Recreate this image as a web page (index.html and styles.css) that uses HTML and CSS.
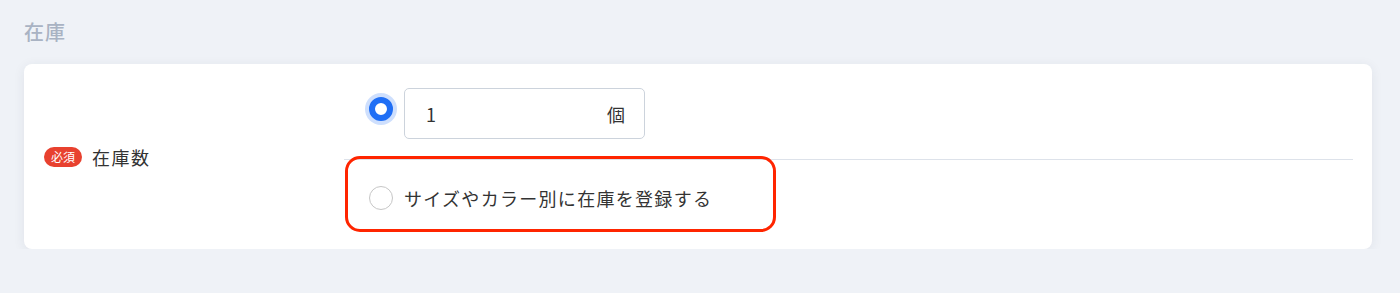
FILE: index.html
```html
<!DOCTYPE html>
<html lang="ja">

<head>
  <meta charset="UTF-8" />
  <meta name="viewport" content="width=device-width, initial-scale=1.0" />
  <title>在庫</title>
  <link rel="stylesheet" href="styles.css">
</head>

<body>
  <div class="section">
    <h2 class="section-title">在庫</h2>

    <div class="card">
      <div class="field-label">
        <span class="required">必須</span>
        <span class="label-text">在庫数</span>
      </div>

      <div class="field-body">
        <div class="option option-stock">
          <span class="radio checked"></span>
          <div class="stock-input">
            <span class="stock-value">1</span>
            <span class="stock-unit">個</span>
          </div>
        </div>

        <div class="option option-variant">
          <span class="radio"></span>
          <span class="option-text">サイズやカラー別に在庫を登録する</span>
          <div class="highlight"></div>
        </div>
      </div>
    </div>
  </div>
</body>

</html>
```

FILE: styles.css
```css
body {
  margin: 0;
  font-family: "Noto Sans CJK JP", "Noto Sans", sans-serif;
  background-color: #eff2f7;
  color: #333;
}

.section {
  padding: 18px 28px 0 24px;
}

.section-title {
  margin: 0 0 18px 0;
  font-size: 20px;
  font-weight: 500;
  line-height: 28px;
  letter-spacing: 1px;
  color: #a9b3c3;
}

.card {
  display: flex;
  align-items: stretch;
  background-color: #fff;
  border-radius: 8px;
  box-shadow: 0 2px 12px rgba(40, 50, 80, 0.08);
  padding: 0 19px 0 20px;
}

.field-label {
  display: flex;
  align-items: center;
  width: 300px;
  flex-shrink: 0;
}

.required {
  display: inline-block;
  background-color: #e8412f;
  color: #fff;
  font-size: 12px;
  line-height: 20px;
  padding: 0 7px;
  border-radius: 10px;
  margin-right: 10px;
}

.label-text {
  font-size: 18px;
  letter-spacing: 1.5px;
  color: #333;
}

.field-body {
  flex: 1;
}

.option {
  display: flex;
  align-items: center;
  padding-left: 25px;
}

.option-stock {
  align-items: flex-start;
  padding-top: 24px;
  padding-bottom: 20px;
  border-bottom: 1px solid #dde2ea;
}

.option-stock .radio {
  margin-top: 9px;
}

.option-variant {
  position: relative;
  padding-top: 25px;
  padding-bottom: 38px;
}

.radio {
  width: 24px;
  height: 24px;
  box-sizing: border-box;
  border-radius: 50%;
  border: 1px solid #c6c6c6;
  flex-shrink: 0;
  margin-right: 11px;
  background-color: #fff;
}

.radio.checked {
  border: 6px solid #1f6ef5;
  box-shadow: 0 0 0 4px rgba(31, 110, 245, 0.22);
}

.stock-input {
  display: flex;
  justify-content: space-between;
  align-items: center;
  width: 241px;
  height: 51px;
  box-sizing: border-box;
  border: 1px solid #ccd3dc;
  border-radius: 5px;
  padding: 0 19px 0 21px;
  font-size: 18px;
  color: #333;
}

.option-text {
  font-size: 18px;
  letter-spacing: 1.3px;
  color: #333;
}

.highlight {
  position: absolute;
  left: 1px;
  top: -4px;
  width: 431px;
  height: 76px;
  box-sizing: border-box;
  border: 3px solid #ff2500;
  border-radius: 15px;
}
```
